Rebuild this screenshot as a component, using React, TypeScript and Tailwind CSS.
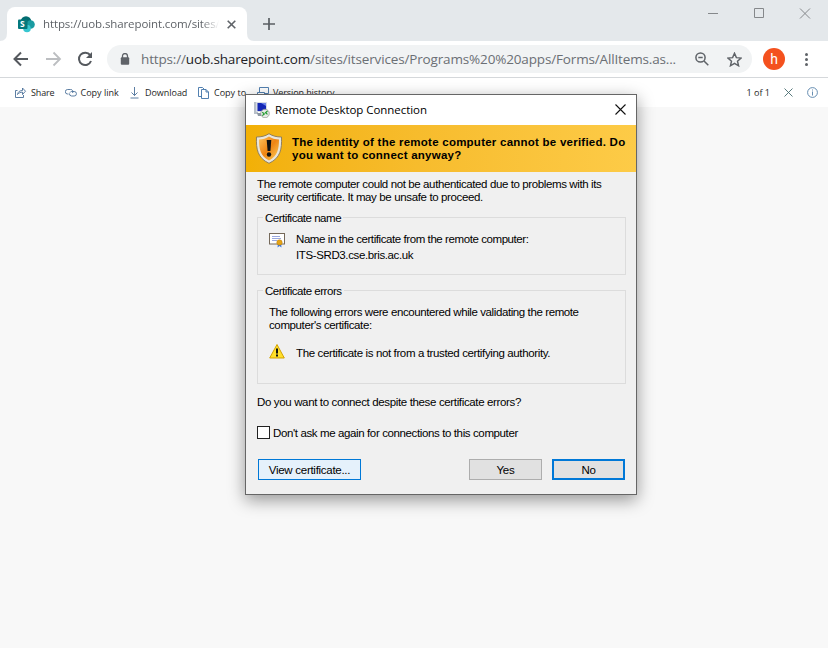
import React from 'react';

function Toolbar() {
  return (
    <div className="flex h-[37px] items-center border-b border-[#d5d8db] bg-white">
      <svg className="ml-[13px] h-4 w-4" viewBox="0 0 16 16" fill="none" stroke="#55595e" strokeWidth="2"><path d="M15 8H2M8 1.500 1.500 8 8 14.500" /></svg>
      <svg className="ml-[17px] h-4 w-4" viewBox="0 0 16 16" fill="none" stroke="#bcbec1" strokeWidth="1.800"><path d="M0 8h13M7.500 1.500 14 8l-6.500 6.500" /></svg>
      <svg className="ml-[15px] h-4 w-4" viewBox="0 0 16 16" fill="none" stroke="#55595e" strokeWidth="2"><path d="M13.200 4.200A6.200 6.200 0 1 0 14 10" /><path d="M15 1v6H9z" fill="#55595e" stroke="none" /></svg>
      <div className="ml-[14px] flex h-7 w-[645px] shrink-0 items-center rounded-full bg-[#f1f3f4]">
        <svg className="ml-[13px] h-3 w-[10px]" viewBox="0 0 10 12"><path d="M2.500 5V3a2.500 2.500 0 0 1 5 0v2" fill="none" stroke="#5f6368" strokeWidth="1.300" /><rect x="0.800" y="4.200" width="8.400" height="7.600" rx="1" fill="#5f6368" /></svg>
        <div className="ml-[11px] w-[545px] whitespace-nowrap font-['Open_Sans',sans-serif] text-[13.5px] leading-5 tracking-[-0.153px] text-[#6b6f74]">
          https://<span className="text-[#202124]">uob.sharepoint.com</span>/sites/itservices/Programs%20%20apps/Forms/AllItems.as...
        </div>
        <svg className="ml-[9px] h-[14px] w-[14px]" viewBox="0 0 14 14" fill="none" stroke="#5f6368" strokeWidth="1.500"><circle cx="5.500" cy="5.500" r="4.600" /><path d="m9 9 4.300 4.300M3.300 5.500h4.400" /></svg>
        <svg className="ml-[18px] h-[15px] w-[15px]" viewBox="0 0 24 24" fill="none" stroke="#5f6368" strokeWidth="2.300"><path d="m12 2 3 7 7.500.700-5.700 5 1.700 7.300-6.500-3.900L5.500 22l1.700-7.300-5.700-5L9 9z" /></svg>
      </div>
      <div className="ml-[11px] flex h-[22px] w-[22px] items-center justify-center rounded-full bg-[#f4511e] font-['Roboto',sans-serif] text-[14px] text-white">h</div>
      <div className="ml-[20px] flex flex-col gap-[2px]">
        <i className="h-[3px] w-[3px] rounded-full bg-[#5f6368]" /><i className="h-[3px] w-[3px] rounded-full bg-[#5f6368]" /><i className="h-[3px] w-[3px] rounded-full bg-[#5f6368]" />
      </div>
    </div>
  );
}

function TabStrip() {
  return (
    <div className="flex h-[41px] bg-[#e4e8eb]">
      <svg className="mt-[33px] h-2 w-[7px] shrink-0" viewBox="0 0 7 8"><path d="M7 0v8H0Q7 8 7 0" fill="#fff" /></svg>
      <div className="mt-[7px] flex h-[34px] w-[240px] shrink-0 items-center rounded-t-[8px] bg-white">
        <svg className="ml-[11px] h-[17px] w-[17px]" viewBox="0 0 17 17"><circle cx="8" cy="5.500" r="5.300" fill="#036c70" /><circle cx="12.500" cy="8.500" r="4.300" fill="#1a9ba1" /><circle cx="9" cy="12.500" r="3.800" fill="#37c6d0" /><rect x="0" y="3.500" width="9.500" height="9.500" rx="1" fill="#03787c" /><text x="2" y="11.300" fontSize="8.500" fontWeight="700" fill="#fff" fontFamily="Open Sans">S</text></svg>
        <div className="ml-2 w-[176px] whitespace-nowrap font-['Open_Sans',sans-serif] text-[11.5px] tracking-[-0.11px] text-[#5f6368] [mask-image:linear-gradient(90deg,#000_90%,transparent)]">https://uob.sharepoint.com/sites/</div>
        <svg className="ml-[8px] h-[9px] w-[9px]" viewBox="0 0 9 9" stroke="#5f6368" strokeWidth="1.600"><path d="m.700.700 7.600 7.600m0-7.600L.700 8.300" /></svg>
      </div>
      <svg className="mt-[33px] h-2 w-[7px] shrink-0" viewBox="0 0 7 8"><path d="M0 0v8h7Q0 8 0 0" fill="#fff" /></svg>
      <svg className="ml-[9px] mt-[18px] h-3 w-3" viewBox="0 0 12 12" stroke="#5a5e63" strokeWidth="1.700"><path d="M0 6h12M6 0v12" /></svg>
      <svg className="ml-[433px] mt-[8px] h-[11px] w-[103px]" viewBox="0 0 103 11" fill="none" stroke="#85888b"><path d="M0 5.500h10M46.500.500h9v9h-9zM92 .500l10 10m0-10-10 10" /></svg>
    </div>
  );
}

function CommandBar() {
  const label = "whitespace-nowrap text-[9px] text-[#262626]";
  const ic = "h-3 w-3 shrink-0";
  return (
    <div className="flex h-[29px] items-center bg-white font-['Open_Sans',sans-serif]">
      <svg className={`ml-[15px] ${ic}`} viewBox="0 0 12 12" fill="none" stroke="#4a6f99" strokeWidth=".9"><path d="M2.500 3.500H.500v7h8V8M2.500 7.500C3 4.500 5 3.500 7.500 3.500V1l3 3.200-3 3.300V5.200C5.500 5.200 4 5.700 2.500 7.500" /></svg>
      <div className={`ml-[4px] w-[34px] tracking-[-0.15px] ${label}`}>Share</div>
      <svg className={ic} viewBox="0 0 12 12" fill="none" stroke="#4a6f99" strokeWidth=".9"><path d="M3.500 7H2.600a2.200 2.200 0 0 1 0-4.500h3A2.200 2.200 0 0 1 7.500 6M5 5.500a2.200 2.200 0 0 1 1.500-1h2.700a2.200 2.200 0 0 1 0 4.500H6.500A2.200 2.200 0 0 1 4.500 6.500" /></svg>
      <div className={`ml-[3.500px] w-[49.500px] ${label}`}>Copy link</div>
      <svg className={ic} viewBox="0 0 12 12" fill="none" stroke="#4a6f99" strokeWidth=".9"><path d="M4.500 0v8.500M1.500 5.500l3 3 3-3M.500 11h8" /></svg>
      <div className={`ml-[3px] w-[53px] tracking-[-0.04px] ${label}`}>Download</div>
      <svg className={ic} viewBox="0 0 12 12" fill="none" stroke="#3f73a8" strokeWidth=".9"><path d="M3.500 9.500H.500v-9h4L6 2M3.500 2.500h4.500l2.500 2.500v6.500h-7zM8 2.500V5h2.500" /></svg>
      <div className={`ml-[4px] w-[43px] ${label}`}>Copy to</div>
      <svg className={ic} viewBox="0 0 12 12" fill="none" stroke="#3f73a8" strokeWidth=".9"><path d="M2.500 5V.500h9v6h-4M.500 5.500h7v4h-4l-1.500 2v-2H.500z" /></svg>
      <div className={`ml-[4px] tracking-[-0.1px] ${label}`}>Version history</div>
      <div className={`ml-auto ${label}`}>1 of 1</div>
      <svg className="ml-[14px] h-[9px] w-[9px]" viewBox="0 0 9 9" stroke="#466b6e" strokeWidth=".9"><path d="m.500.500 8 8m0-8-8 8" /></svg>
      <svg className="ml-[14px] mr-[10px] h-[11px] w-[11px]" viewBox="0 0 11 11" fill="none" stroke="#5580a8" strokeWidth=".9"><circle cx="5.500" cy="5.500" r="4.900" /><path d="M5.500 4.500v4M5.500 2.500v1" /></svg>
    </div>
  );
}

function Dialog() {
  return (
    <div className="absolute left-[245px] top-[94px] flex h-[401px] w-[392px] flex-col border border-[#666] bg-[#f0f0f0] font-['Liberation_Sans',sans-serif] text-[11.5px] leading-[13px] text-black shadow-[0_5px_16px_rgba(0,0,0,0.4)]">
      <div className="flex h-[30px] items-center bg-white">
        <svg className="mb-px ml-2 h-4 w-4" viewBox="0 0 16 16"><rect x="0" y="0" width="4" height="12" fill="#b7bfc9" /><rect x="2" y="0" width="11" height="10" fill="#d8dde6" /><rect x="3.500" y="1" width="8.500" height="8" fill="#1527b5" /><path d="m7 1 5 3V1z" fill="#6c83e8" /><path d="M3 11h8l1 3H4z" fill="#8d97a2" /><circle cx="11" cy="11.500" r="4.300" fill="#e6e9e6" stroke="#8b918b" strokeWidth=".7" /><path d="m8.300 10.200 2 1.700-2 1.700M13.500 9l-2 1.700 2 1.700" fill="none" stroke="#1e9a2c" strokeWidth="1.200" /></svg>
        <span className="mb-px ml-[5px] whitespace-nowrap font-['Open_Sans',sans-serif] text-[11.5px] tracking-[-0.05px]">Remote Desktop Connection</span>
        <svg className="mb-px ml-auto mr-[10px] h-[11px] w-[11px]" viewBox="0 0 11 11" stroke="#111" strokeWidth="1.100"><path d="m.500.500 10 10m0-10-10 10" /></svg>
      </div>
      <div className="flex h-[47px] items-center bg-linear-to-r from-[#f2b005] to-[#fdcb47] font-bold">
        <svg className="mb-px ml-[9px] h-[31px] w-[28px]" viewBox="0 0 27 31">
          <defs><linearGradient id="shield" x1="0" y1="0" x2="1" y2="1"><stop offset="0" stopColor="#ffc45c" /><stop offset=".5" stopColor="#ee8413" /><stop offset="1" stopColor="#ffd35e" /></linearGradient></defs>
          <path d="M13.500.700C10 3 6 4 1 4c-.500 12 1 21 12.500 26.300C25 25 26.500 16 26 4 21 4 17 3 13.500.700Z" fill="#e9e6dc" stroke="#84765c" strokeWidth=".9" />
          <path d="M13.500 3.500C10.500 5.500 7.500 6.300 3.500 6.500c0 9.500 1.500 16.500 10 21 8.500-4.500 10-11.500 10-21-4-.200-7-1-10-3Z" fill="url(#shield)" />
          <path d="M11.200 7h4.600l-.900 11h-2.800z" fill="#111" /><circle cx="13.500" cy="21.500" r="2.200" fill="#111" />
        </svg>
        <div className="ml-[9px] whitespace-nowrap tracking-[0.24px]">The identity of the remote computer cannot be verified. Do<br />you want to connect anyway?</div>
      </div>
      <div className="flex flex-1 flex-col whitespace-nowrap px-[11px] pt-[6px] tracking-[-0.38px]">
        <div><span className="tracking-[-0.39px]">The remote computer could not be authenticated due to problems with its</span><br /><span className="tracking-[-0.365px]">security certificate. It may be unsafe to proceed.</span></div>
        <section className="-mr-px mt-[13px] h-[58px] border border-[#dcdcdc]">
          <div className="-mt-[6px] ml-[5px] w-fit bg-[#f0f0f0] px-[2px] tracking-[-0.48px]">Certificate name</div>
          <div className="mt-[6px] flex">
            <svg className="ml-[11px] mt-[2px] h-[15px] w-4" viewBox="0 0 16 15"><rect x=".500" y=".500" width="15" height="10.500" fill="#fff" stroke="#75695a" /><path d="M3 3.500h8M3 5.500h9M3 7.500h5" stroke="#9aa8de" /><path d="m9 10-.500 4.500L10.500 13l2 1.500L12 10" fill="#3677e8" /><circle cx="10.500" cy="9.500" r="2.700" fill="#e6a416" stroke="#b87a08" strokeWidth=".5" /></svg>
            <div className="ml-[11px] leading-4"><span className="tracking-[-0.42px]">Name in the certificate from the remote computer:</span><br />ITS-SRD3.cse.bris.ac.uk</div>
          </div>
        </section>
        <section className="-mr-px mt-[15px] h-[94px] border border-[#dcdcdc]">
          <div className="-mt-[6px] ml-[5px] w-fit bg-[#f0f0f0] px-[2px] tracking-[-0.47px]">Certificate errors</div>
          <div className="ml-[11px] mt-[8px]"><span className="tracking-[-0.4px]">The following errors were encountered while validating the remote</span><br />computer's certificate:</div>
          <div className="ml-[11px] mt-[11px] flex">
            <svg className="h-4 w-4" viewBox="0 0 16 16"><path d="M8 1.500 15.300 15H.700Z" fill="#ffe02a" stroke="#d3a100" strokeLinejoin="round" /><path d="M8 5.500v5M8 11.500v2" stroke="#111" strokeWidth="2" /></svg>
            <span className="ml-[11px] mt-[4px] tracking-[-0.37px]">The certificate is not from a trusted certifying authority.</span>
          </div>
        </section>
        <div className="mt-[12px] tracking-[-0.354px]">Do you want to connect despite these certificate errors?</div>
        <div className="mt-[17px] flex h-[13px]"><i className="h-[13px] w-[13px] border border-[#222] bg-white" /><span className="ml-[3px] mt-px">Don't ask me again for connections to this computer</span></div>
        <div className="mt-[20px] flex h-[21px] leading-5 tracking-[-0.28px]">
          <button className="ml-px w-[103px] border border-[#0078d7] bg-[#e5f1fb]">View certificate...</button>
          <button className="ml-[108px] w-[73px] border border-[#adadad] bg-[#e1e1e1]">Yes</button>
          <button className="ml-[10px] w-[73px] border-2 border-[#0078d7] bg-[#e1e1e1] leading-[18px]">No</button>
        </div>
      </div>
    </div>
  );
}

export default function App() {
  return (
    <div className="relative h-[648px] w-[828px] overflow-hidden bg-[#f8f8f8]">
      <TabStrip />
      <Toolbar />
      <CommandBar />
      <Dialog />
    </div>
  );
}
